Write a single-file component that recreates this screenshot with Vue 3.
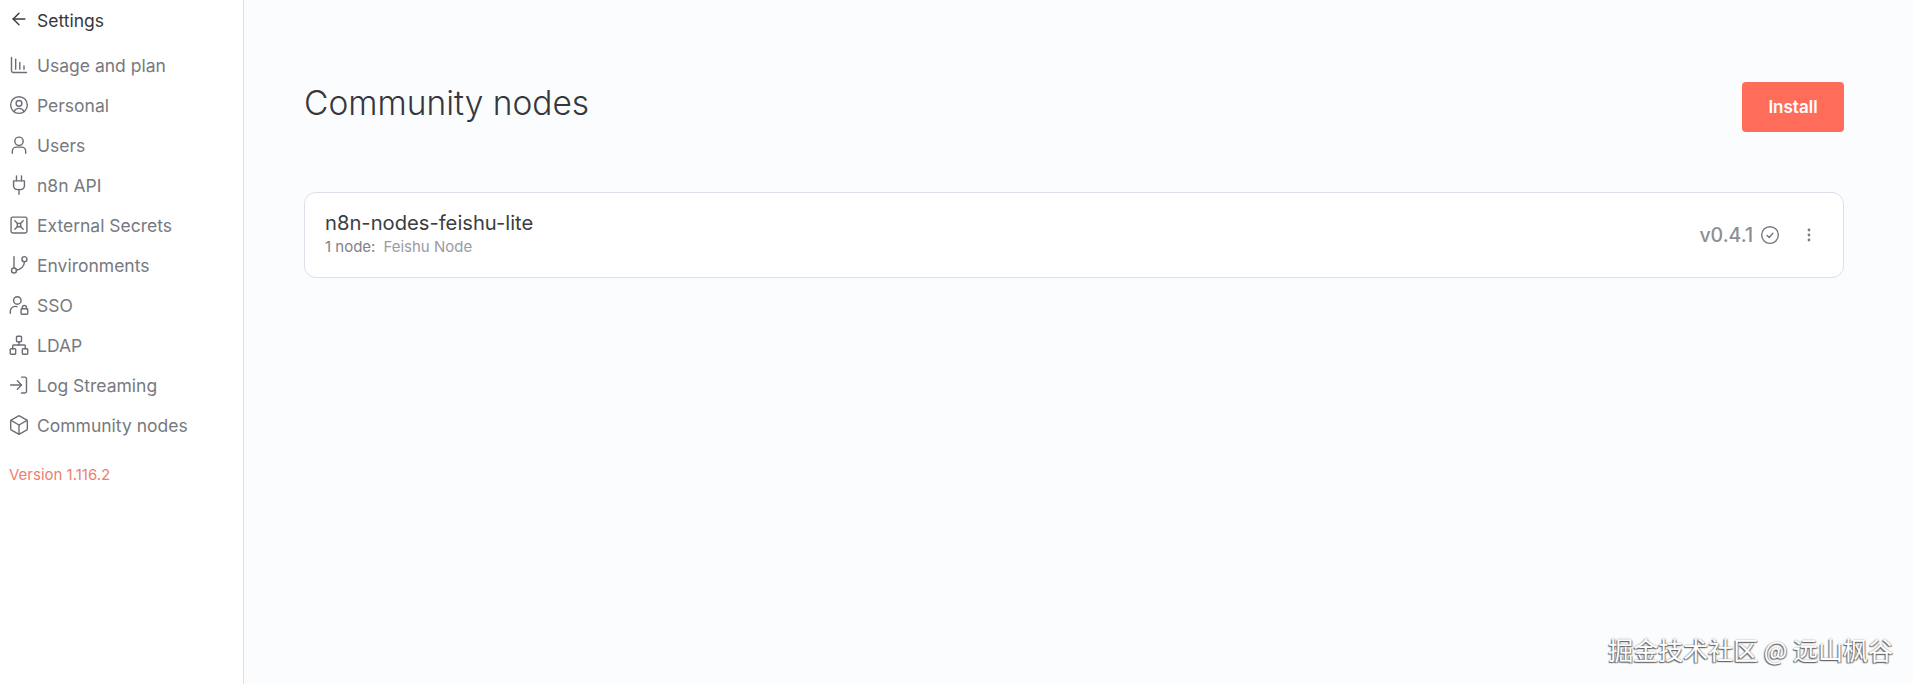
<template>
  <div class="layout">
    <aside class="sidebar">
      <div class="back">
        <svg class="back-icon" viewBox="0 0 24 24"><path d="M19 12H5" /><path d="m12 19-7-7 7-7" /></svg>
        <span>Settings</span>
      </div>
      <nav class="menu">
        <div v-for="item in menu" :key="item.label" class="menu-item">
          <svg class="icon" viewBox="0 0 24 24">
            <path v-for="d in item.paths" :key="d" :d="d" />
          </svg>
          <span>{{ item.label }}</span>
        </div>
      </nav>
      <div class="version">Version 1.116.2</div>
    </aside>

    <main class="content">
      <header class="head">
        <h1>Community nodes</h1>
        <button class="install">Install</button>
      </header>

      <section class="card">
        <div class="card-info">
          <div class="pkg">n8n-nodes-feishu-lite</div>
          <div class="sub"><span class="count">1 node:</span><span>Feishu Node</span></div>
        </div>
        <div class="card-actions">
          <span class="ver">v0.4.1</span>
          <svg class="check" viewBox="0 0 24 24"><circle cx="12" cy="12" r="10" /><path d="m8.5 12.5 2.5 2.5 4.5-5" /></svg>
          <svg class="dots" viewBox="0 0 4 16"><circle cx="2" cy="3" r="1.4" /><circle cx="2" cy="8" r="1.4" /><circle cx="2" cy="13" r="1.4" /></svg>
        </div>
      </section>
    </main>

    <div class="watermark">掘金技术社区 @ 远山枫谷</div>
  </div>
</template>

<script setup>
const menu = [
  { label: 'Usage and plan', paths: ['M3 3v16a2 2 0 0 0 2 2h16', 'M8 17V5', 'M13 17V9', 'M18 17v-4'] },
  { label: 'Personal', paths: ['M12 2a10 10 0 1 0 0 20 10 10 0 0 0 0-20z', 'M12 6.5a3.5 3.5 0 1 0 0 7 3.5 3.5 0 0 0 0-7z', 'M6 20a6.5 6.5 0 0 1 12 0'] },
  { label: 'Users', paths: ['M20 22v-2.500a5 5 0 0 0-5-5H9a5 5 0 0 0-5 5V22', 'M12 2.500a5 5 0 1 0 0 10 5 5 0 0 0 0-10z'] },
  { label: 'n8n API', paths: ['M12 23v-6', 'M9 7V1', 'M15 7V1', 'M18.500 7v6a4.500 4.500 0 0 1-4.500 4.500h-4A4.500 4.500 0 0 1 5.500 13V7z'] },
  { label: 'External Secrets', paths: ['M4.500 2.500h15a2 2 0 0 1 2 2v15a2 2 0 0 1-2 2h-15a2 2 0 0 1-2-2v-15a2 2 0 0 1 2-2z', 'M7 7l3.500 3.500', 'M17 7l-3.500 3.500', 'M7 17l3.500-3.500', 'M17 17l-3.500-3.500', 'M10 10h4v4h-4z'] },
  { label: 'Environments', paths: ['M6 2v13', 'M18.500 2a3 3 0 1 0 0 6 3 3 0 0 0 0-6z', 'M6 15.500a3 3 0 1 0 0 6 3 3 0 0 0 0-6z', 'M18.500 8a10 10 0 0 1-10 10'] },
  { label: 'SSO', paths: ['M10 2a4.500 4.500 0 1 0 0 9 4.500 4.500 0 0 0 0-9z', 'M1.500 22v-2.500a6 6 0 0 1 8-5.500', 'M15.500 16.500h6a1 1 0 0 1 1 1V22a1 1 0 0 1-1 1h-6a1 1 0 0 1-1-1v-4.500a1 1 0 0 1 1-1z', 'M16 16.500V15a2.500 2.500 0 0 1 5 0v1.500'] },
  { label: 'LDAP', paths: ['M10 1.500h4a1 1 0 0 1 1 1V7a1 1 0 0 1-1 1h-4a1 1 0 0 1-1-1V2.500a1 1 0 0 1 1-1z', 'M2.500 16.500H7a1 1 0 0 1 1 1V22a1 1 0 0 1-1 1H2.500a1 1 0 0 1-1-1v-4.500a1 1 0 0 1 1-1z', 'M17 16.500h4.500a1 1 0 0 1 1 1V22a1 1 0 0 1-1 1H17a1 1 0 0 1-1-1v-4.500a1 1 0 0 1 1-1z', 'M4.500 16.500V13a1 1 0 0 1 1-1h13a1 1 0 0 1 1 1v3.500', 'M12 12V8'] },
  { label: 'Log Streaming', paths: ['M15 2.500h4a2 2 0 0 1 2 2v15a2 2 0 0 1-2 2h-4', 'm10 17 5-5-5-5', 'M15 12H2'] },
  { label: 'Community nodes', paths: ['M22 7.500a2 2 0 0 0-1-1.730l-8-4.500a2 2 0 0 0-2 0l-8 4.500a2 2 0 0 0-1 1.730v9a2 2 0 0 0 1 1.730l8 4.500a2 2 0 0 0 2 0l8-4.500a2 2 0 0 0 1-1.730z', 'm2.500 6.500 9.500 5.500 9.500-5.500', 'M12 23V12'] }
]
</script>

<style>
html, body { margin: 0; height: 100%; overflow: hidden; }
</style>

<style scoped>
.layout {
  position: relative;
  display: flex;
  height: 684px;
  font-family: Inter, "Noto Sans CJK SC", sans-serif;
  background: #fbfcfe;
}

.sidebar {
  width: 243px;
  flex-shrink: 0;
  background: #fff;
  border-right: 1px solid #dbdfe7;
}

.back {
  display: flex;
  align-items: center;
  height: 20px;
  margin-top: 10px;
  padding-left: 9px;
  gap: 8px;
  font-size: 17.5px;
  color: #37383d;
}

.back-icon {
  width: 20px;
  height: 20px;
  margin-top: -2px;
  fill: none;
  stroke: #3a3b40;
  stroke-width: 1.7;
  stroke-linecap: round;
  stroke-linejoin: round;
}

.menu {
  margin-top: 15px;
}

.menu-item {
  display: flex;
  align-items: center;
  height: 40px;
  padding-left: 9px;
  gap: 8px;
  font-size: 17.5px;
  color: #777981;
}

.icon {
  width: 20px;
  height: 20px;
  flex-shrink: 0;
  fill: none;
  stroke: #6c6e76;
  stroke-width: 1.7;
  stroke-linecap: round;
  stroke-linejoin: round;
}

.version {
  margin-top: 20px;
  padding-left: 9px;
  font-size: 15px;
  line-height: 20px;
  color: #ee7f70;
}

.content {
  flex: 1;
  padding: 82px 69px 0 60px;
}

.head {
  display: flex;
  align-items: flex-start;
  justify-content: space-between;
  height: 110px;
}

h1 {
  margin: 0;
  font-size: 33.5px;
  font-weight: 300;
  line-height: 43px;
  color: #36373c;
}

.install {
  width: 102px;
  height: 50px;
  border: 0;
  border-radius: 4px;
  background: #ff6d5a;
  color: #fff;
  font-family: inherit;
  font-size: 17px;
  font-weight: 600;
}

.card {
  display: flex;
  align-items: center;
  justify-content: space-between;
  height: 86px;
  box-sizing: border-box;
  padding: 0 32px 0 20px;
  background: #fff;
  border: 1px solid #dbdfe7;
  border-radius: 12px;
}

.pkg {
  font-size: 20.2px;
  line-height: 24px;
  margin-top: -3px;
  color: #3c3d42;
}

.sub {
  display: flex;
  gap: 8px;
  font-size: 15px;
  line-height: 20px;
  margin-top: 2px;
  color: #9a9ba3;
}

.count {
  color: #808188;
}

.card-actions {
  display: flex;
  align-items: center;
}

.ver {
  font-size: 19.5px;
  font-weight: 500;
  color: #8d8e95;
}

.check {
  width: 20px;
  height: 20px;
  margin-left: 7px;
  fill: none;
  stroke: #77787f;
  stroke-width: 1.7;
  stroke-linecap: round;
  stroke-linejoin: round;
}

.dots {
  width: 4px;
  height: 16px;
  margin-left: 27px;
  fill: #7c7d84;
}

.watermark {
  position: absolute;
  right: 20px;
  bottom: 20px;
  font-family: "Noto Sans CJK SC", sans-serif;
  font-size: 25px;
  line-height: 30px;
  color: #fff;
  text-shadow: -1px 1px 1px #666, 1px 1px 1px #888, 0 0 2px #999;
}
</style>
